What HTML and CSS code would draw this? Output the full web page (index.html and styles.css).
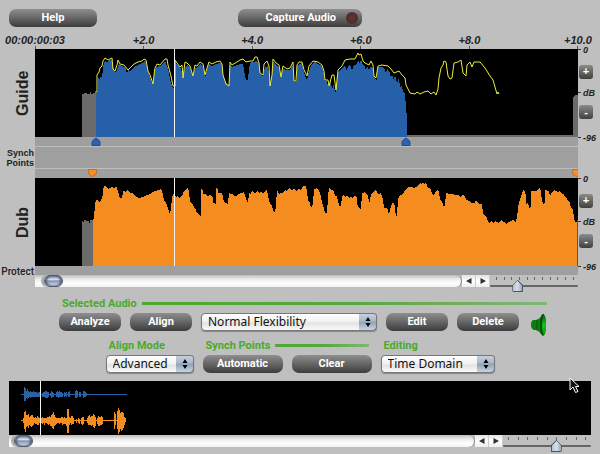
FILE: index.html
```html
<!DOCTYPE html>
<html lang="en">
<head>
  <meta charset="UTF-8">
  <title>Guide / Dub Alignment</title>
  <meta name="viewport" content="width=device-width, initial-scale=1">
  <link rel="stylesheet" href="styles.css">
</head>
<body>
  <header class="topbar">
    <button type="button" class="btn help">Help</button>
    <button type="button" class="btn capture">Capture Audio<span class="rec"></span></button>
  </header>

  <main>
    <section class="editor">
      <div class="ruler">
        <span class="start">00:00:00:03</span>
        <span class="first">+2.0</span>
        <span>+4.0</span>
        <span>+6.0</span>
        <span>+8.0</span>
        <span>+10.0</span>
      </div>

      <h2 class="track-name">Guide</h2>
      <svg class="wave" viewBox="35 49 543 88" preserveAspectRatio="none">
        <path fill="#6b6b6b" d="M82 137V94h2v-1h3v1h3v-2h1v2h2v-1h3v44zM400 137v-2h173V97l2-2h3v42z"/>
        <polygon class="fill-guide" points="96,137 96,93 98,92 98,80 99,76 100,81 101,74 102,80 103,66 105,61 107,62 109,60 112,60 113,66 115,72 117,70 119,64 121,66 124,67 126,69 127,75 128,70 130,72 134,67 138,65 142,63 144,61 146,63 148,71 150,78 153,85 154,75 156,67 160,66 165,61 168,68 170,79 173,88 175,88 175,61 178,66 181,69 183,78 185,67 187,65 190,67 193,77 195,68 197,68 200,64 203,66 205,78 207,70 209,64 212,66 216,64 220,63 222,65 223,76 226,83 229,86 230,65 232,67 237,65 240,64 243,64 244,70 246,80 248,80 249,68 251,62 254,62 256,60 259,64 260,74 263,76 265,67 268,66 270,86 272,76 273,62 276,65 279,67 281,78 283,69 287,70 290,70 293,65 294,82 297,81 297,66 299,64 302,63 304,73 307,80 309,71 312,64 315,62 318,64 322,66 324,74 325,83 326,79 328,85 329,87 331,81 332,90 334,83 335,95 336,90 338,72 342,68 345,66 347,71 348,66 350,64 352,70 354,65 357,64 358,60 360,64 361,59 363,66 364,64 366,71 367,66 369,70 371,66 373,69 374,78 375,74 376,84 377,76 378,67 382,67 385,69 386,75 387,68 390,73 391,78 392,74 394,80 395,75 397,83 399,78 400,87 402,86 403,92 405,93 406,108 407,118 407,137"/>
        <polyline class="envelope" points="95,92 97,92 97,75 99,72 100,68 102,66 103,61 105,58 108,60 112,58 113,69 115,71 117,65 118,60 120,64 124,65 128,70 134,64 138,62 142,61 144,59 146,60 148,71 150,75 153,84 154,75 155,68 157,64 160,65 165,59 167,59 168,65 171,76 173,86 175,86 175,60 177,63 180,67 182,65 183,78 185,62 187,63 190,66 193,76 195,65 197,66 200,62 203,64 205,75 207,68 209,62 212,64 216,62 220,61 222,64 223,75 226,84 229,86 230,62 232,65 237,62 240,60 243,59 246,62 250,61 253,61 255,57 257,57 259,63 260,73 263,75 264,64 267,61 269,66 270,86 272,75 273,59 276,63 279,65 281,77 283,66 287,69 290,68 293,62 294,81 296,81 297,65 299,62 302,62 304,70 307,76 309,66 313,61 318,62 322,65 324,71 325,80 328,80 329,86 332,75 334,75 336,90 338,70 342,66 345,60 350,59 355,59 358,53 359,55 361,54 363,61 365,63 369,65 371,61 373,65 374,76 376,78 378,66 382,65 388,66 391,69 394,73 399,71 402,75 405,78 406,85 408,89 410,93 415,94 417,92 420,94 424,92 428,91 431,94 434,92 436,95 438,89 439,78 441,68 443,65 444,61 446,62 448,76 450,79 452,78 454,63 458,62 461,60 463,73 466,76 467,65 470,62 472,67 474,62 480,62 485,68 490,76 493,80 495,87 497,94 498,92 499,94"/>
        <path class="playhead" d="M174.500 49v88"/>
      </svg>
      <div class="db-scale">
        <span>0</span>
        <button type="button" aria-label="Zoom in guide">+</button>
        <span>dB</span>
        <button type="button" aria-label="Zoom out guide">-</button>
        <span>-96</span>
      </div>

      <p class="band-name">Synch<br>Points</p>
      <svg class="synch-band" viewBox="35 137 543 41" preserveAspectRatio="none">
        <path stroke="#bdbdbd" d="M35 146.500h543M35 168.500h543"/>
        <path fill="#2c62b4" stroke="#1d4a90" d="M92 145.500v-3q0-2 2-3l2-1.500 2 1.500q2 1 2 3v3zM402 145.500v-3q0-2 2-3l2-1.500 2 1.500q2 1 2 3v3z"/>
        <path fill="#f68d26" stroke="#c76d19" d="M88.500 169.500v3q0 2 2 2.500l2 2 2-2q2-.5 2-2.500v-3zM572.500 169.500v3q0 2 2 2.500l2 2 2-2v-5.500z"/>
      </svg>

      <h2 class="track-name">Dub</h2>
      <svg class="wave" viewBox="35 178 543 88" preserveAspectRatio="none">
        <path fill="#6b6b6b" d="M82 266v-45h1v1h1v-2h2v1h3v2h1v-3h3v46z"/>
        <polygon class="fill-dub" points="93,266 93,220 94,218 95,204 96,200 98,200 99,202 101,201 103,195 103,190 104,187 105,185 107,188 108,189 112,187 114,188 116,186 117,188 119,194 119,197 121,199 122,197 124,189 125,192 127,190 130,193 133,193 136,197 140,198 145,196 147,195 150,194 152,192 156,191 158,190 161,189 162,191 164,200 166,203 168,208 170,214 171,208 172,198 173,194 175,194 176,198 178,195 179,198 183,194 184,191 186,190 188,187 189,192 190,202 193,204 194,208 196,210 197,213 199,215 201,217 201,189 203,191 203,194 206,194 208,197 210,194 213,198 213,203 216,204 216,188 218,190 218,193 222,193 224,202 228,204 229,193 231,195 232,193 234,196 236,196 238,194 242,193 244,191 245,196 248,203 249,193 251,194 252,191 255,194 257,191 259,193 261,192 263,194 265,191 267,190 269,200 270,204 272,205 273,211 275,213 276,205 277,190 279,194 281,192 282,194 285,190 287,192 288,189 290,187 291,190 294,189 296,191 299,189 301,190 303,186 306,186 307,191 308,200 309,202 310,203 311,208 313,204 314,189 317,188 319,191 321,196 322,203 323,205 325,213 327,213 328,197 329,188 331,190 334,191 335,196 337,196 338,201 340,208 341,204 343,194 345,197 347,195 349,198 351,196 352,198 355,196 357,198 357,204 359,208 361,210 362,193 365,192 368,196 369,202 370,201 371,194 373,193 375,190 377,191 378,194 381,193 383,199 384,208 387,208 388,210 389,215 390,210 392,203 394,203 395,206 396,219 397,214 398,200 399,196 401,195 403,194 405,190 407,188 409,187 412,187 414,188 418,186 420,183 421,184 423,182 424,184 426,183 428,188 430,188 432,193 434,196 435,193 437,190 439,191 440,200 442,201 444,207 445,205 446,193 449,194 452,194 455,195 458,195 461,197 462,195 465,196 466,200 469,201 472,203 475,203 476,200 479,204 482,204 483,213 485,216 487,218 488,222 490,223 491,221 494,223 495,221 499,223 501,220 504,222 506,224 508,222 511,221 513,220 515,222 516,221 517,218 518,208 519,202 520,200 522,194 523,190 525,191 526,196 526,204 528,203 530,209 531,205 531,191 535,191 538,190 540,187 541,192 542,202 543,202 544,205 545,202 545,190 549,191 550,196 552,192 554,190 558,192 560,191 562,194 564,194 565,197 567,198 568,201 570,203 571,208 573,210 574,218 575,222 577,222 577,266"/>
        <path stroke="#555" d="M577.500 220v46"/>
        <path class="playhead" d="M174.500 178v88"/>
      </svg>
      <div class="db-scale">
        <span>0</span>
        <button type="button" aria-label="Zoom in dub">+</button>
        <span>dB</span>
        <button type="button" aria-label="Zoom out dub">-</button>
        <span>-96</span>
      </div>

      <p class="protect-name">Protect</p>
      <div class="protect-band"></div>

      <div class="scroll-row">
        <div class="scroll-track"><span class="scroll-thumb"></span></div>
        <button type="button" class="arrow" aria-label="Scroll left"><svg viewBox="0 0 6 6"><path d="M5.500 0v6L0 3z"/></svg></button>
        <button type="button" class="arrow" aria-label="Scroll right"><svg viewBox="0 0 6 6"><path d="M.5 0v6L6 3z"/></svg></button>
        <div class="zoom">
          <svg viewBox="0 0 88 3" preserveAspectRatio="none"><path d="M6.500 0v3m8-3v3m7-3v3m8-3v3m8-3v3m7-3v3m8-3v3m8-3v3m7-3v3m8-3v3m8-3v3"/></svg>
          <input type="range" value="29" aria-label="Time zoom">
        </div>
      </div>
    </section>

    <section class="controls">
      <div class="group selected-audio">
        <h3>Selected Audio</h3>
        <div class="row">
          <button type="button" class="btn">Analyze</button>
          <button type="button" class="btn">Align</button>
          <div class="select flexibility">
            <select aria-label="Flexibility"><option>Normal Flexibility</option></select>
            <svg viewBox="0 0 18 18"><path d="M9 4l2.500 4h-5zM9 14l2.500-4h-5z"/></svg>
          </div>
          <button type="button" class="btn">Edit</button>
          <button type="button" class="btn">Delete</button>
          <button type="button" class="speaker" aria-label="Play">
            <svg viewBox="0 0 17 24">
              <defs>
                <linearGradient id="cone" x1="0" x2="1">
                  <stop offset="0" stop-color="#0b5f0e"/>
                  <stop offset=".5" stop-color="#0a8a12"/>
                  <stop offset="1" stop-color="#064a08"/>
                </linearGradient>
                <linearGradient id="face" x1="0" x2="0" y1="0" y2="1">
                  <stop offset="0" stop-color="#066a0a"/>
                  <stop offset=".5" stop-color="#0fc51d"/>
                  <stop offset="1" stop-color="#0a9a12"/>
                </linearGradient>
              </defs>
              <path fill="#06800c" d="M3 7h5v10H4q-3-1-3-5t2-5z"/>
              <path fill="url(#cone)" d="M6 7q4-1 6-5l2-1v21l-3-1q-2-3-5-4z"/>
              <ellipse cx="13" cy="12" rx="3" ry="11" fill="#064a08"/>
              <ellipse cx="14" cy="12" rx="2" ry="10" fill="url(#face)"/>
            </svg>
          </button>
        </div>
      </div>

      <div class="modes">
        <div class="group">
          <h3 class="plain"><label for="alignMode">Align Mode</label></h3>
          <div class="select align-mode">
            <select id="alignMode"><option>Advanced</option></select>
            <svg viewBox="0 0 18 18"><path d="M9 4l2.500 4h-5zM9 14l2.500-4h-5z"/></svg>
          </div>
        </div>
        <div class="group">
          <h3>Synch Points</h3>
          <div class="row">
            <button type="button" class="btn wide">Automatic</button>
            <button type="button" class="btn wide">Clear</button>
          </div>
        </div>
        <div class="group">
          <h3 class="plain"><label for="editing">Editing</label></h3>
          <div class="select editing">
            <select id="editing"><option>Time Domain</option></select>
            <svg viewBox="0 0 18 18"><path d="M9 4l2.500 4h-5zM9 14l2.500-4h-5z"/></svg>
          </div>
        </div>
      </div>
    </section>

    <section class="overview">
      <svg class="overview-wave" viewBox="9 381 582 54" preserveAspectRatio="none">
        <path class="line-guide" d="M21 394.500h106M24.500 387v14M25.500 388v13M26.500 391v7M27.500 389v10M28.500 391v7M29.500 392v5M30.500 391v7M31.500 392v5M32.500 392v5M33.500 391v6M34.500 392v5M35.500 392v5M36.500 392v5M37.500 393v4M38.500 392v5M39.500 392v5M42.500 393v4M43.500 392v5M44.500 392v5M45.500 391v7M46.500 391v7M47.500 392v6M48.500 392v5M50.500 393v3M51.500 391v7M52.500 392v5M53.500 393v4M56.500 392v5M57.500 391v6M58.500 392v6M59.500 391v6M60.500 392v5M61.500 392v5M62.500 393v4M64.500 392v5M65.500 393v3M66.500 392v5M68.500 392v5M69.500 391v6M75.500 391v7M76.500 390v8M77.500 391v6M79.500 392v5M80.500 392v5M83.500 391v7M84.500 391v6M85.500 392v5M86.500 393v3"/>
        <path class="line-dub" d="M21 420.500h105M23.500 418v5M24.500 412v17M25.500 411v21M26.500 415v12M27.500 415v11M28.500 414v14M29.500 417v8M30.500 416v10M31.500 415v12M32.500 415v11M33.500 417v8M34.500 418v5M35.500 417v7M36.500 418v6M37.500 416v9M38.500 417v8M39.500 418v5M40.500 418v6M41.500 418v5M42.500 417v7M43.500 418v5M44.500 418v7M45.500 418v5M46.500 418v5M47.500 417v7M48.500 417v8M49.500 416v8M50.500 417v9M51.500 415v11M52.500 414v14M53.500 412v17M54.500 415v11M55.500 417v8M56.500 418v6M57.500 418v5M58.500 418v5M59.500 418v6M60.500 418v5M61.500 417v6M62.500 417v8M63.500 418v6M64.500 417v7M65.500 418v6M66.500 418v8M67.500 409v24M68.500 409v24M69.500 417v8M70.500 418v5M71.500 416v9M72.500 416v8M73.500 418v6M76.500 419v4M78.500 418v5M79.500 419v5M81.500 418v6M82.500 417v8M83.500 417v7M87.500 418v5M88.500 416v9M89.500 415v10M90.500 417v8M91.500 416v10M92.500 416v9M93.500 414v13M94.500 415v13M95.500 417v9M97.500 418v6M98.500 416v10M99.500 417v9M100.500 417v8M101.500 416v9M102.500 417v7M114.500 412v17M115.500 414v11M117.500 411v18M118.500 408v26M119.500 410v22M120.500 413v16M121.500 412v19M122.500 412v18M123.500 413v15M124.500 417v8M125.500 418v4"/>
        <path class="playhead" d="M40.500 381v54"/>
      </svg>
      <svg class="pointer" viewBox="0 0 12 17"><path d="M1 1v12l3-3 2.500 5.500 2.500-1L6.500 9.500H10z"/></svg>
      <div class="scroll-row">
        <div class="scroll-track"><span class="scroll-thumb"></span></div>
        <button type="button" class="arrow" aria-label="Overview left"><svg viewBox="0 0 6 6"><path d="M5.500 0v6L0 3z"/></svg></button>
        <button type="button" class="arrow" aria-label="Overview right"><svg viewBox="0 0 6 6"><path d="M.5 0v6L6 3z"/></svg></button>
        <div class="zoom">
          <svg viewBox="0 0 88 3" preserveAspectRatio="none"><path d="M5.500 0v3m10-3v3m9-3v3m10-3v3m10-3v3m9-3v3m10-3v3m10-3v3m9-3v3"/></svg>
          <input type="range" value="62" aria-label="Overview zoom">
        </div>
      </div>
    </section>
  </main>
</body>
</html>
```

FILE: styles.css
```css
body {
  margin: 0;
  background: #bfbfbf;
  color: #222;
  font-family: "Liberation Sans", Arial, sans-serif;
}
h2, h3, p {
  margin: 0;
}
svg {
  display: block;
}
button {
  padding: 0;
  border: 0;
  font-family: inherit;
}

.btn {
  width: 62px;
  height: 18px;
  border-radius: 7px;
  background: linear-gradient(#8e8e8e, #6a6a6a 45%, #3c3c3c);
  color: #fff;
  font: bold 11px/18px Roboto, "Liberation Sans", sans-serif;
  text-align: center;
}
.btn.wide {
  width: 80px;
}
.btn.help {
  width: 88px;
}
.btn.capture {
  display: flex;
  align-items: center;
  justify-content: flex-end;
  gap: 10px;
  width: 124px;
  padding-right: 4px;
}
.rec {
  width: 12px;
  height: 12px;
  border-radius: 50%;
  background: radial-gradient(#6d3434, #4c2c2c 60%, #444);
}

.topbar {
  display: grid;
  grid-template-columns: 1fr auto 1fr;
  padding: 9px 9px 0;
}

/* track editor */
.editor {
  display: grid;
  grid-template-columns: 35px 1fr 22px;
}
.ruler {
  grid-column: 2;
  display: grid;
  grid-template-columns: repeat(5, 1fr);
  padding-top: 7px;
  font: italic bold 11px/12px "Liberation Sans", Arial, sans-serif;
}
.ruler span {
  grid-row: 1;
  justify-self: end;
  width: 60px;
  margin-right: -30px;
  text-align: center;
}
.ruler span::after {
  content: "";
  display: block;
  width: 1px;
  height: 3px;
  margin: 0 auto;
  background: #555;
}
.ruler .start {
  grid-column: 1;
  justify-self: start;
  margin-left: -30px;
}
.ruler .first {
  grid-column: 1;
}
.track-name {
  grid-column: 1;
  justify-self: center;
  padding-right: 10px;
  writing-mode: vertical-rl;
  transform: rotate(180deg);
  font-size: 16px;
  line-height: 18px;
  text-align: center;
}
.wave {
  width: 100%;
  height: 88px;
  background: #000;
  shape-rendering: crispEdges;
}
.fill-guide {
  fill: #2560a8;
}
.fill-dub {
  fill: #f58c1f;
}
.envelope {
  fill: none;
  stroke: #ecec3c;
  shape-rendering: auto;
}
.playhead {
  stroke: #f4f4f4;
}

.db-scale {
  display: grid;
  grid-template-rows: 10px 33px 10px 28px 1fr;
  align-items: center;
  margin: -4px 0 -6px;
  font: italic bold 9px/10px "Liberation Sans", Arial, sans-serif;
}
.db-scale span:last-child {
  align-self: end;
}
.db-scale span::before {
  content: "";
  display: inline-block;
  width: 3px;
  height: 1px;
  margin-right: 2px;
  vertical-align: 3px;
  background: #333;
}
.db-scale button {
  width: 14px;
  height: 14px;
  margin-left: 1px;
  border-radius: 3px;
  background: linear-gradient(#8a8a8a, #404040);
  color: #fff;
  font: bold 11px/13px "Liberation Sans", Arial, sans-serif;
}

.band-name, .protect-name {
  grid-column: 1;
  padding-right: 1px;
  font-weight: bold;
  text-align: right;
}
.band-name {
  align-self: center;
  font-size: 9px;
  line-height: 10px;
}
.protect-name {
  height: 9px;
  font: 500 10px/11px Roboto, "Liberation Sans", sans-serif;
}
.synch-band {
  width: 100%;
  height: 41px;
  background: #9f9f9f;
}
.protect-band {
  height: 9px;
  background: #9f9f9f;
}
.synch-band, .protect-band {
  grid-column: 2;
}

/* scrollbars and zoom sliders */
.scroll-row {
  grid-column: 2;
  display: flex;
  align-items: flex-start;
  height: 12px;
}
.scroll-track {
  flex: 1;
  height: 12px;
  padding-left: 9px;
  border-right: 1px solid #888;
  border-radius: 0 7px 7px 0;
  background: linear-gradient(#bcbcbc, #ececec 35%, #fff 70%, #f2f2f2);
}
.overview .scroll-track {
  padding-left: 5px;
}
.scroll-thumb {
  display: block;
  box-sizing: border-box;
  width: 19px;
  height: 12px;
  border: 1px solid #4e5a70;
  border-radius: 6px;
  background: linear-gradient(#7e8ba3, #d4deee 35%, #8593ab 50%, #dbe6f4);
  box-shadow: inset 2px 0 2px #55617a, inset -2px 0 2px #55617a, -3px 0 1px #aaa;
}
.arrow {
  display: flex;
  align-items: center;
  justify-content: center;
  width: 14px;
  height: 12px;
  border-right: 1px solid #ccc;
  background: linear-gradient(#e2e2e2, #fff 50%, #eee);
}
.arrow svg {
  width: 6px;
  height: 6px;
  fill: #333;
}
.zoom {
  width: 88px;
  padding-top: 2px;
}
.zoom svg {
  width: 100%;
  height: 3px;
  stroke: #666;
}
.zoom input {
  display: block;
  width: 100%;
  height: 12px;
  margin: 0;
  background: none;
  appearance: none;
}
.zoom input::-webkit-slider-runnable-track {
  height: 2px;
  border-radius: 1px;
  background: #666;
}
.zoom input::-webkit-slider-thumb {
  width: 11px;
  height: 12px;
  margin-top: -5px;
  appearance: none;
  background:
    linear-gradient(#4c535f, #4c535f) bottom / 100% 1px no-repeat,
    linear-gradient(to bottom right, #4c535f 54%, transparent 55%) top left / 6px 6px no-repeat,
    linear-gradient(to bottom left, #4c535f 54%, transparent 55%) top right / 6px 6px no-repeat,
    linear-gradient(90deg, #4c535f 1px, #b4c2d4 1px, #d5dfec 50%, #9aa8bc 10px, #4c535f 10px);
  clip-path: polygon(50% 0, 100% 45%, 100% 90%, 90% 100%, 10% 100%, 0 90%, 0 45%);
}

/* command area */
.controls {
  display: flex;
  flex-direction: column;
  align-items: center;
  gap: 8px;
  padding: 10px 0 8px;
}
.group h3 {
  display: flex;
  align-items: center;
  gap: 5px;
  margin-bottom: 3px;
  padding: 0 3px;
  color: #4aaa2c;
  font: bold 11px/13px Roboto, "Liberation Sans", sans-serif;
}
.group h3::after {
  content: "";
  flex: 1;
  height: 3px;
  background: linear-gradient(90deg, #4fa832, #55a83b 50%, #7fb874);
}
.group h3.plain::after {
  display: none;
}
.selected-audio {
  padding-left: 6px;
}
.selected-audio h3 {
  padding-right: 0;
}
.row, .modes {
  display: flex;
  gap: 9px;
}
.row {
  height: 18px;
}
.select {
  position: relative;
  height: 18px;
}
.select select {
  display: block;
  box-sizing: border-box;
  width: 100%;
  height: 18px;
  margin: 0;
  padding: 0 20px 0 6px;
  border: 1px solid #777;
  border-radius: 4px;
  background: linear-gradient(#fff, #f0f0f0 50%, #e2e2e2 55%, #fafafa);
  box-shadow: 0 1px 1px #888;
  color: #111;
  font: 12px/16px "Noto Sans", sans-serif;
  appearance: none;
}
.select svg {
  position: absolute;
  top: 0;
  right: 0;
  width: 18px;
  height: 18px;
  border-radius: 0 4px 4px 0;
  background: linear-gradient(#c9d3e0, #a9b7c9 45%, #8fa2b9 50%, #cddbe9);
  box-shadow: inset 0 1px #777, inset -1px -1px #777;
  pointer-events: none;
}
.flexibility {
  width: 176px;
}
.align-mode {
  width: 88px;
}
.editing {
  width: 114px;
}
.speaker {
  width: 17px;
  height: 24px;
  margin-left: 2px;
  background: none;
}

/* overview strip */
.overview {
  position: relative;
  padding: 0 9px 7px;
}
.overview-wave {
  width: 100%;
  height: 54px;
  background: #000;
}
.line-guide {
  stroke: #2a62a6;
}
.line-dub {
  stroke: #f58c1f;
}
.pointer {
  position: absolute;
  top: -4px;
  right: 19px;
  width: 12px;
  height: 17px;
  fill: #111;
  stroke: #fff;
}
```
